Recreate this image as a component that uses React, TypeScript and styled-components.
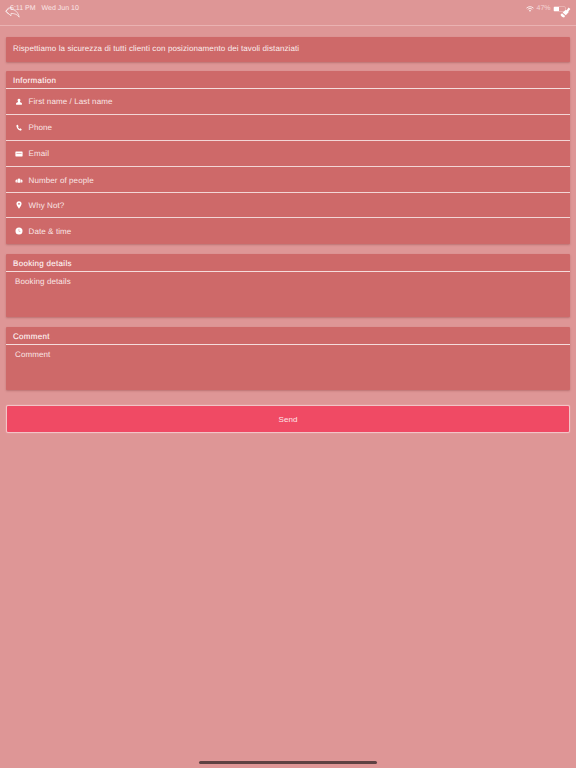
import styled, { createGlobalStyle } from "styled-components";
import { ReactNode } from "react";

const GlobalStyle = createGlobalStyle`
  html, body {
    margin: 0;
    padding: 0;
    background: #de9696;
    font-family: "Liberation Sans", Arial, sans-serif;
    color: #fbeeee;
    text-rendering: geometricPrecision;
  }
`;

const icons: Record<string, ReactNode> = {
  user: <path d="M5 1a1.700 1.700 0 0 1 1.500 2.700c-.4.6-.4 1.200.1 1.600l2 1v2H1.400v-2l2-1c.5-.4.5-1 .1-1.600A1.700 1.700 0 0 1 5 1z" />,
  phone: <path d="M2.200 1.400l1.300-.4 1 2-.8.8c.3 1 1 1.800 2 2.300l.8-.7 1.900 1.200-.5 1.300c-.3.4-.8.5-1.300.3C4 7.300 2.400 5.400 1.800 2.700c-.1-.5 0-1 .4-1.300z" />,
  mail: <path fillRule="evenodd" d="M1.200 2h7.600a.7.7 0 0 1 .7.7v4.600a.7.7 0 0 1-.7.7H1.200a.7.7 0 0 1-.7-.7V2.700a.7.7 0 0 1 .7-.7zM1.800 3.600v.8h6.400v-.8z" />,
  people: <path d="M3.700 2.200a1.300 1.300 0 0 1 1.300 0 1.300 1.300 0 0 1 1.300 0c.6.4.6 1.200.4 1.700.6.600.6 2.500 0 3.300H3.300c-.6-.8-.6-2.700 0-3.300-.2-.5-.2-1.300.4-1.700zM1.800 3.200a1 1 0 0 1 1 .4c-.5.7-.6 2.300-.3 3.200H1C.3 5.800.4 3.800 1.800 3.200zM8.200 3.200c1.400.6 1.500 2.600.8 3.600H7.500c.3-.9.2-2.500-.3-3.200a1 1 0 0 1 1-.4z" />,
  pin: <path fillRule="evenodd" d="M5 .3a3.200 3.200 0 0 1 3.200 3.200c0 2.200-2 4-3.200 6.200C3.800 7.500 1.800 5.700 1.800 3.500A3.200 3.200 0 0 1 5 .3zm0 2.100a1.100 1.100 0 1 0 0 2.200 1.100 1.100 0 0 0 0-2.200z" />,
  clock: (
    <path
      fillRule="evenodd"
      d="M5 .6a4.400 4.400 0 1 1 0 8.800 4.400 4.400 0 0 1 0-8.800zM4.700 2.400v2.900l2 1 .2-.4-1.700-.9V2.400z"
    />
  ),
};

const Icon = ({ name }: { name: string }) => (
  <RowIcon viewBox="0 0 10 10" fill="#ffffff">
    {icons[name]}
  </RowIcon>
);

const fields = [
  { icon: "user", label: "First name / Last name", height: 26, shift: 0 },
  { icon: "phone", label: "Phone", height: 26, shift: 0 },
  { icon: "mail", label: "Email", height: 26, shift: 0 },
  { icon: "people", label: "Number of people", height: 26, shift: 2 },
  { icon: "pin", label: "Why Not?", height: 25, shift: 0 },
  { icon: "clock", label: "Date & time", height: 26, shift: 0 },
];

export default function App() {
  return (
    <>
      <GlobalStyle />
      <Page>
        <StatusBar>
          <StatusTime>6:11 PM</StatusTime>
          <StatusDate>Wed Jun 10</StatusDate>
          <StatusRight>
            <svg width="8" height="6" viewBox="0 0 16 12" fill="none" stroke="#ffffff" strokeWidth="1.600">
              <path d="M1 4.200C5 .4 11 .4 15 4.200" />
              <path d="M3.500 6.800c2.600-2.400 6.400-2.400 9 0" />
              <path d="M8 11.500L5.800 9.200c1.300-1 3.100-1 4.400 0z" fill="#ffffff" stroke="none" />
            </svg>
            <BatteryText>47%</BatteryText>
            <Battery>
              <BatteryLevel />
            </Battery>
          </StatusRight>
          <BackIcon width="15" height="12" viewBox="0 0 15 12" fill="none" stroke="#fff" strokeWidth="0.8" strokeOpacity="0.8">
            <path d="M.8 5.200L6 .8v2.400c4 .2 7.200 3 8.200 8-1.600-2.700-4.400-3.800-8.200-3.800v2.400z" />
            <path d="M3.800 1.500L.8 5.200l3 3.200" />
          </BackIcon>
          <BrushIcon width="11" height="11" viewBox="0 0 11 11" fill="#fff">
            <path d="M8.600.4l1.800 1.600-2 2.200.2 1.100-2.800 3L2.600 5.600l3-2.500 1.100.2z" />
            <path d="M2 6.200l3.100 2.900-1 1.500C2.700 10.400 1 9.100.5 7.700z" />
          </BrushIcon>
        </StatusBar>

        <Content>
          <Banner>Rispettiamo la sicurezza di tutti clienti con posizionamento dei tavoli distanziati</Banner>

          <Card>
            <CardHeader>Information</CardHeader>
            {fields.map((f, i) => (
              <FieldRow key={f.label} $height={f.height} $shift={f.shift} $last={i === fields.length - 1}>
                <Icon name={f.icon} />
                <span>{f.label}</span>
              </FieldRow>
            ))}
          </Card>

          <Card>
            <CardHeader>Booking details</CardHeader>
            <TextArea>Booking details</TextArea>
          </Card>

          <Card>
            <CardHeader>Comment</CardHeader>
            <TextArea>Comment</TextArea>
          </Card>

          <SendButton>Send</SendButton>
        </Content>

        <HomeIndicator />
      </Page>
    </>
  );
}

const Page = styled.div`
  position: relative;
  width: 576px;
  height: 768px;
  overflow: hidden;
  background: #de9696;
`;

const StatusBar = styled.div`
  position: relative;
  display: flex;
  align-items: flex-start;
  box-sizing: border-box;
  height: 26px;
  padding: 5px 10px 0 10px;
  border-bottom: 1px solid #eab2b2;
  font-size: 7px;
  line-height: 8px;
  color: #fbe6e6;
`;

const StatusTime = styled.span`
  margin-right: 6px;
`;

const StatusDate = styled.span``;

const StatusRight = styled.div`
  display: flex;
  align-items: center;
  gap: 2.500px;
  margin-left: auto;
`;

const BatteryText = styled.span`
  color: #f6d6d6;
`;

const Battery = styled.div`
  box-sizing: border-box;
  width: 13px;
  height: 6px;
  border-radius: 2px;
  border: 1px solid #e9b3b3;
`;

const BatteryLevel = styled.div`
  width: 5px;
  height: 100%;
  background: #ffffff;
`;

const BackIcon = styled.svg`
  position: absolute;
  left: 5px;
  top: 6px;
`;

const BrushIcon = styled.svg`
  position: absolute;
  right: 5px;
  top: 7px;
`;

const Content = styled.div`
  display: flex;
  flex-direction: column;
  padding: 11px 6px 0;
`;

const Banner = styled.div`
  box-sizing: border-box;
  height: 25px;
  padding: 0 7px 2px;
  display: flex;
  align-items: center;
  margin-bottom: 9px;
  background: #ce6969;
  box-shadow: 0 1px 2px rgba(120, 50, 50, 0.35);
  border-radius: 1px;
  font-size: 8px;
  letter-spacing: 0.1px;
`;

const Card = styled.section`
  background: #ce6969;
  box-shadow: 0 1px 2px rgba(120, 50, 50, 0.35);
  border-radius: 1px;
  margin-bottom: 10px;
`;

const CardHeader = styled.div`
  box-sizing: border-box;
  height: 18px;
  padding: 2px 7px 0;
  display: flex;
  align-items: center;
  border-bottom: 1px solid #f5dcdc;
  font-size: 8px;
  letter-spacing: 0.3px;
  -webkit-text-stroke: 0.1px #fff6f6;
  color: #fff6f6;
`;

const FieldRow = styled.div<{ $height: number; $shift: number; $last: boolean }>`
  box-sizing: border-box;
  height: ${(p) => p.$height}px;
  display: flex;
  align-items: center;
  padding: ${(p) => p.$shift}px 0 0 8.500px;
  border-bottom: ${(p) => (p.$last ? "none" : "1px solid #f3d6d6")};
  font-size: 8px;
  letter-spacing: 0.1px;
  color: #fae6e6;
`;

const RowIcon = styled.svg`
  width: 8px;
  height: 8px;
  margin-right: 6px;
  flex-shrink: 0;
`;

const TextArea = styled.div`
  box-sizing: border-box;
  height: 45px;
  padding: 5px 9px;
  font-size: 8px;
  line-height: 10px;
  letter-spacing: 0.1px;
  color: #fae6e6;
`;

const SendButton = styled.button`
  box-sizing: border-box;
  height: 28px;
  margin-top: 5px;
  border: 1px solid #f4c3c6;
  border-radius: 2px;
  background: #f04a64;
  box-shadow: 0 0 1px rgba(255, 230, 230, 0.8);
  color: #fde5e8;
  font-family: inherit;
  font-size: 8px;
  letter-spacing: 0.1px;
`;

const HomeIndicator = styled.div`
  position: absolute;
  left: 199px;
  bottom: 4px;
  width: 178px;
  height: 3px;
  border-radius: 2px;
  background: #5e4142;
`;
